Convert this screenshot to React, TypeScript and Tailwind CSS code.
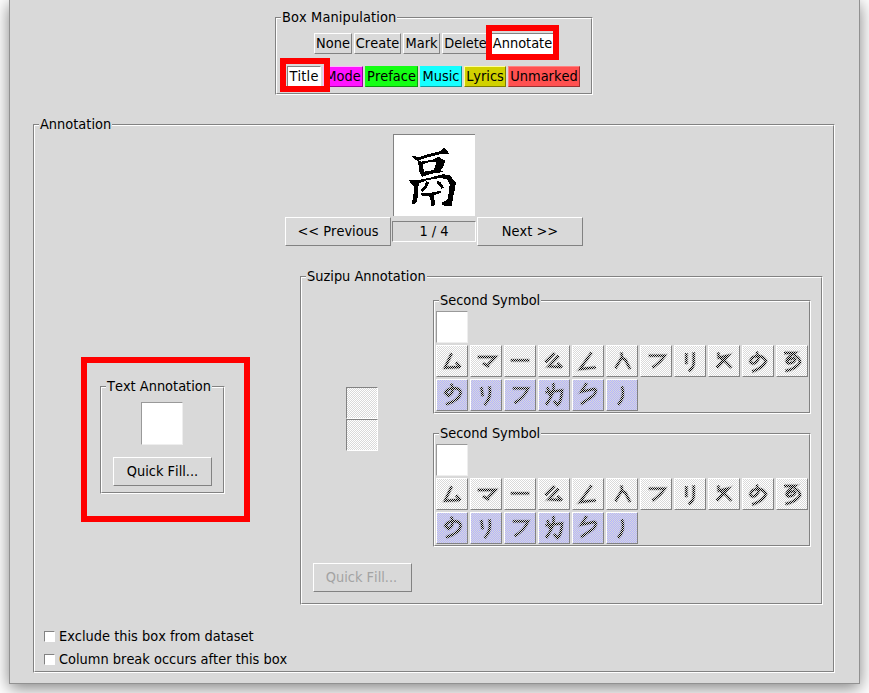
import type { ReactNode } from "react";

const upper = [
  "M47 25L27 68L72 66M60 52L73 67",
  "M23 36H76Q66 48 54 58M38 54L58 66",
  "M20 46H76",
  "M50 24L22 52M62 32L32 64L68 66M58 54L72 67",
  "M59 22L24 72L72 67",
  "M46 22L48 36L28 70M46 38L58 44L72 72",
  "M26 32H74Q62 52 37 68",
  "M37 24V58M59 22V56Q58 70 44 78",
  "M31 22L32 38L60 32L26 68M36 38Q56 50 70 68",
  "M44 20L50 40Q40 60 28 54Q20 48 34 36Q60 26 72 48Q64 68 30 80",
  "M24 24H56L42 34Q24 48 38 55Q56 54 58 42Q52 36 34 46M54 30Q72 38 72 52Q62 70 28 78",
];

const lower = [
  "M46 14L50 28Q50 44 38 50L28 42Q32 30 50 28Q74 26 74 42Q70 64 30 76",
  "M34 24L38 52M58 22Q66 54 44 78",
  "M26 28H72Q62 54 32 72",
  "M46 12Q52 40 24 78M22 40L72 34Q70 70 58 78L48 66M28 24L36 50",
  "M44 12L28 38L66 30Q78 32 64 50L26 76",
  "M48 22Q58 54 36 78",
];

const stipple =
  "bg-[repeating-conic-gradient(transparent_0_25%,#d9d9d9_0_50%)] bg-[length:2px_2px]";
const raised = "border border-t-white border-l-white border-r-[#828282] border-b-[#828282]";
const sunken = "border border-t-[#828282] border-l-[#828282] border-r-white border-b-white";

function Groove({ title, className, children }: { title: string; className: string; children: ReactNode }) {
  return (
    <div className={`shrink-0 ${sunken} ${className}`}>
      <div className={`h-full w-full ${raised}`}>
        <div className="-mt-[11px] ml-1 h-[19px] w-fit bg-[#d9d9d9] px-px leading-[18px]">{title}</div>
        {children}
      </div>
    </div>
  );
}

function Button({ className, children }: { className: string; children: ReactNode }) {
  return (
    <div className={`flex shrink-0 items-center justify-center ${raised} ${className}`}>{children}</div>
  );
}

function Tab({ className, children }: { className: string; children: ReactNode }) {
  return (
    <div className={`flex h-[21px] shrink-0 items-center justify-center border leading-none ${className}`}>
      {children}
    </div>
  );
}

const plainTab = "border-t-white border-l-white border-r-[#828282] border-b-[#828282]";
const activeTab = "bg-white border-t-[#828282] border-l-[#828282] border-r-white border-b-white";

function Symbol({ d, blue }: { d: string; blue?: boolean }) {
  return (
    <div className={`grid h-8 w-8 ${raised} ${blue ? "bg-[#b4b4ff]" : "bg-white"}`}>
      <svg viewBox="3 3 90 90" className="col-start-1 row-start-1 h-[30px] w-[30px]" fill="none" stroke="#000">
        <path d={d} strokeWidth="13" opacity="0.2" />
        <path d={d} strokeWidth="7" />
      </svg>
      <div className={`col-start-1 row-start-1 ${stipple}`} />
    </div>
  );
}

function SymbolPanel() {
  return (
    <Groove title="Second Symbol" className="h-[114px] w-[378px]">
      <div className="mt-px ml-px flex flex-col gap-0.5">
        <div className="h-8 w-8 border border-t-[#999] border-l-[#999] border-r-[#eee] border-b-[#eee] bg-white" />
        <div className="flex gap-0.5">
          {upper.map((d) => (
            <Symbol key={d} d={d} />
          ))}
        </div>
        <div className="flex gap-0.5">
          {lower.map((d) => (
            <Symbol key={d} d={d} blue />
          ))}
        </div>
      </div>
    </Groove>
  );
}

function Check({ children }: { children: ReactNode }) {
  return (
    <div className="flex h-[17px] items-center gap-1">
      <div className="h-[11px] w-[11px] border border-t-[#828282] border-l-[#828282] border-r-white border-b-white bg-white" />
      <span>{children}</span>
    </div>
  );
}

function Slot() {
  return (
    <div className={`h-8 w-8 bg-white ${sunken}`}>
      <div className={`h-full w-full ${stipple}`} />
    </div>
  );
}

export default function App() {
  return (
    <div className="h-[693px] w-[869px] overflow-hidden bg-white font-['DejaVu_Sans_Condensed','DejaVu_Sans',sans-serif] text-[14.43px] whitespace-nowrap text-black [font-kerning:none]">
      <div className="relative ml-[9px] h-[684px] w-[851px] border border-t-0 border-[#919191] bg-[#d9d9d9] shadow-[0_4px_16px_rgba(0,0,0,0.5)]">
        <div className="h-[124px] pt-[17px] pl-[265px]">
          <Groove title="Box Manipulation" className="h-[78px] w-[318px] [&>div>div:first-child]:tracking-[0.12px]">
            <div className="mt-1.5 ml-[37px] flex gap-0.5">
              <Tab className={`w-[38px] ${plainTab}`}>None</Tab>
              <Tab className={`w-[47px] ${plainTab}`}>Create</Tab>
              <Tab className={`w-[37px] ${plainTab}`}>Mark</Tab>
              <Tab className={`w-[47px] ${plainTab}`}>Delete</Tab>
              <Tab className={`w-[63px] ${activeTab}`}>Annotate</Tab>
            </div>
            <div className="mt-3 ml-2.5 flex gap-0.5">
              <Tab className={`w-[34px] tracking-[0.2px] ${activeTab}`}>Title</Tab>
              <Tab className="w-10 border-t-[#ffb4ff] border-l-[#ffb4ff] border-r-[#990099] border-b-[#990099] bg-[#ff14ff]">Mode</Tab>
              <Tab className="w-[53px] border-t-[#14ff14] border-l-[#14ff14] border-r-[#0c990c] border-b-[#0c990c] bg-[#14ff14]">Preface</Tab>
              <Tab className="w-[42px] border-t-[#14ffff] border-l-[#14ffff] border-r-[#0c9999] border-b-[#0c9999] bg-[#14ffff]">Music</Tab>
              <Tab className="w-[42px] border-t-[#ffff99] border-l-[#ffff99] border-r-[#7d7d00] border-b-[#7d7d00] bg-[#d1d100]">Lyrics</Tab>
              <Tab className="w-[72px] border-t-[#ff8080] border-l-[#ff8080] border-r-[#993030] border-b-[#993030] bg-[#ff5050]">Unmarked</Tab>
            </div>
          </Groove>
        </div>

        <Groove title="Annotation" className="ml-[23px] h-[549px] w-[802px]">
          <div className="-mt-px ml-[358px] h-[82px] w-[82px] translate-y-px border-t border-l border-[#828282] bg-white">
            <svg viewBox="12 15 243 243" className="h-[81px] w-[81px]" shapeRendering="crispEdges">
              <path d="M66 79L90 80L124 70L150 64L160 54L167 56L178 71L150 73L120 80L90 90L78 90Z" />
              <path fillRule="evenodd" d="M80 88L94 95L128 89L146 80L166 93L160 108L153 121L160 126L126 131L96 140L88 125L85 100ZM98 103L102 125L132 120L139 96L118 96Z" />
              <path d="M57 150L84 150L120 143L158 133L172 134L184 138L186 147L198 156L194 182L189 200L186 228L164 228L155 222V215L168 214L174 204L179 164L172 148L150 144L110 151L86 160L84 190L81 216L70 223L66 220L71 190V170L64 162Z" />
              <path d="M108 154L118 156L113 166L108 177L96 186L92 178L103 168Z" />
              <path d="M141 153L151 156L162 172L154 176L147 166L140 160Z" />
              <path d="M94 190L122 188L150 183L154 187L142 192L133 195L134 226L124 228L121 206L117 197L95 197Z" />
            </svg>
          </div>
          <div className="mt-0.5 ml-[250px] flex items-start gap-px">
            <Button className="h-[29px] w-[106px]">&lt;&lt; Previous</Button>
            <div className={`mt-1 flex h-[21px] w-[84px] items-center justify-center ${sunken}`}>1 / 4</div>
            <Button className="h-[29px] w-[106px]">Next &gt;&gt;</Button>
          </div>

          <div className="mt-[30px] ml-[65px] flex items-start">
            <Groove title="Text Annotation" className="mt-[110px] h-[108px] w-[125px]">
              <div className="mt-1.5 ml-[39px] h-[43px] w-[42px] border border-t-[#999] border-l-[#999] border-r-[#eee] border-b-[#eee] bg-white" />
              <Button className="mt-3 ml-[11px] h-[29px] w-[99px]">Quick Fill...</Button>
            </Groove>

            <Groove title="Suzipu Annotation" className="ml-[75px] h-[329px] w-[523px]">
              <div className="flex">
                <div className="w-[131px]">
                  <div className="mt-[101px] ml-11">
                    <Slot />
                    <Slot />
                  </div>
                  <Button className="mt-28 ml-[11px] h-[29px] w-[99px] pr-0.5 text-[#a3a3a3]">Quick Fill...</Button>
                </div>
                <div className="mt-3.5 flex flex-col gap-[19px]">
                  <SymbolPanel />
                  <SymbolPanel />
                </div>
              </div>
            </Groove>
          </div>

          <div className="mt-[23px] ml-[9px] flex flex-col gap-1.5">
            <Check>Exclude this box from dataset</Check>
            <Check>Column break occurs after this box</Check>
          </div>
        </Groove>

        <div className="absolute top-[25px] left-[476px] h-[35px] w-[73px] border-6 border-[#f00]" />
        <div className="absolute top-[58px] left-[270px] h-[34px] w-[50px] border-6 border-[#f00]" />
        <div className="absolute top-[357px] left-[71px] h-[165px] w-[169px] border-6 border-[#f00]" />
      </div>
    </div>
  );
}
